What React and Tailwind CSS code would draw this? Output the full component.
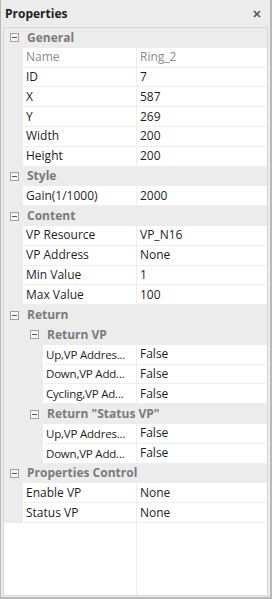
const groups = [
  {
    title: 'General',
    rows: [
      ['Name', 'Ring_2', true],
      ['ID', '7'],
      ['X', '587'],
      ['Y', '269'],
      ['Width', '200'],
      ['Height', '200'],
    ],
  },
  { title: 'Style', rows: [['Gain(1/1000)', '2000']] },
  {
    title: 'Content',
    rows: [
      ['VP Resource', 'VP_N16'],
      ['VP Address', 'None'],
      ['Min Value', '1'],
      ['Max Value', '100'],
    ],
  },
  {
    title: 'Return',
    subs: [
      {
        title: 'Return VP',
        rows: [
          ['Up,VP Addres...', 'False'],
          ['Down,VP Add...', 'False'],
          ['Cycling,VP Ad...', 'False'],
        ],
      },
      {
        title: 'Return "Status VP"',
        rows: [
          ['Up,VP Addres...', 'False'],
          ['Down,VP Add...', 'False'],
        ],
      },
    ],
  },
  {
    title: 'Properties Control',
    rows: [
      ['Enable VP', 'None'],
      ['Status VP', 'None'],
    ],
  },
];

function MinusBox() {
  return (
    <svg width="9" height="9" viewBox="0 0 9 9" className="shrink-0">
      <rect x="0.5" y="0.5" width="8" height="8" fill="#f7f7f7" stroke="#a0a0a0" />
      <line x1="2" y1="4.5" x2="7" y2="4.5" stroke="#555" strokeWidth="1" />
    </svg>
  );
}

function Category({ title, nested }) {
  return (
    <div className="flex h-[19.8px] items-center bg-[#ececec]">
      <div className={nested ? 'flex w-[39px] justify-end pr-[4px]' : 'flex w-[19px] justify-end pr-[4px]'}>
        <MinusBox />
      </div>
      <span className="pl-[4px] text-[12px] font-bold text-[#7b7b7b] whitespace-nowrap">{title}</span>
    </div>
  );
}

function Row({ name, value, muted, nested }) {
  const color = muted ? 'text-[#8a8a8a]' : 'text-[#1e1e1e]';
  return (
    <div className="flex h-[19.8px] bg-[#ececec]">
      <div className={nested ? 'w-[39px] shrink-0' : 'w-[19px] shrink-0'} />
      <div
        className={`flex min-w-0 flex-1 items-center border-b border-[#eeeeee] bg-white pl-[3px] whitespace-nowrap ${color} ${
          nested ? 'text-[11.5px] tracking-[-0.2px]' : 'text-[12px]'
        }`}
      >
        {name}
      </div>
      <div className={`flex w-[131px] shrink-0 items-center border-b border-l border-[#eeeeee] bg-white pl-[3px] text-[12px] ${color}`}>
        {value}
      </div>
    </div>
  );
}

export default function App() {
  return (
    <div
      className="flex h-[599px] w-[272px] flex-col bg-[#ececec] border-r-2 border-b-2 border-l border-[#b9b9b9]"
      style={{ fontFamily: '"Open Sans", "Noto Sans", sans-serif' }}
    >
      <div className="flex h-[27px] items-center justify-between pl-[4px] pr-[9px]">
        <span className="text-[12px] font-bold text-[#1e1e1e]">Properties</span>
        <svg width="8" height="8" viewBox="0 0 8 8">
          <path d="M1 1 L7 7 M7 1 L1 7" stroke="#555" strokeWidth="1.6" />
        </svg>
      </div>
      <div className="flex flex-1 flex-col mx-[2px] mb-[1px] border border-[#d6d6d6] bg-white">
        {groups.map((g) => (
          <div key={g.title}>
            <Category title={g.title} />
            {g.rows &&
              g.rows.map(([n, v, m]) => <Row key={n} name={n} value={v} muted={m} />)}
            {g.subs &&
              g.subs.map((s) => (
                <div key={s.title}>
                  <Category title={s.title} nested />
                  {s.rows.map(([n, v]) => (
                    <Row key={n} name={n} value={v} nested />
                  ))}
                </div>
              ))}
          </div>
        ))}
        <div className="flex flex-1">
          <div className="flex-1 border-r border-[#eeeeee]" />
          <div className="w-[130px]" />
        </div>
      </div>
    </div>
  );
}
